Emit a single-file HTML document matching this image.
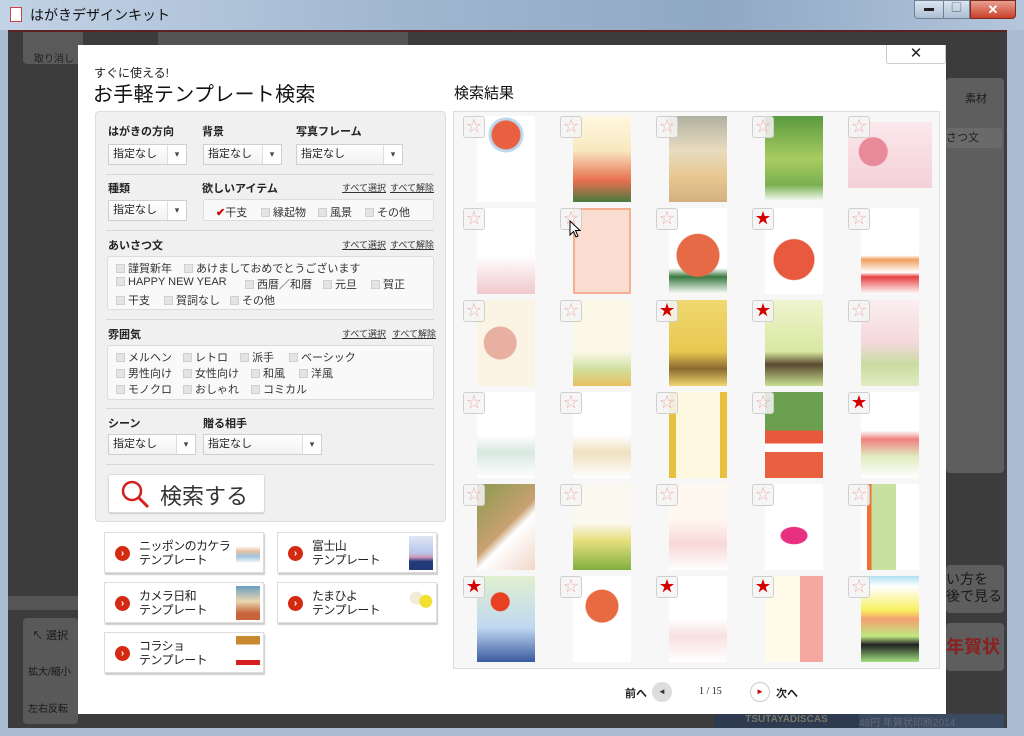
<!DOCTYPE html>
<html><head><meta charset="utf-8"><style>
*{margin:0;padding:0;box-sizing:border-box}
body{width:1024px;height:736px;overflow:hidden;position:relative;font-family:"Liberation Sans","Noto Sans CJK JP",sans-serif;background:#a9bcd2;color:#222}
.a{position:absolute}
.lbl{font-size:11px;font-weight:bold;color:#222}
.sel{position:absolute;height:21px;background:#fff;border:1px solid #cfcfcf;font-size:11px;line-height:19px;padding-left:4px;background:linear-gradient(#fff,#f2f2f2)}
.sel::after{content:"▾";position:absolute;right:0;top:0;width:18px;height:19px;border-left:1px solid #ddd;background:#fff;text-align:center;font-size:9px;color:#444}
.hr{position:absolute;left:106px;width:328px;height:1px;background:#d8d8d8}
.cbx{position:absolute;background:#f9f9f9;border:1px solid #dcdcdc;border-radius:3px}
.cb{position:absolute;font-size:11px;color:#333;white-space:nowrap}
.cb i{display:inline-block;width:9px;height:9px;background:#e4e4e4;border:1px solid #d0d0d0;margin-right:3px;vertical-align:-1px}
.lk{position:absolute;font-size:9px;color:#333;text-decoration:underline}
.tb{position:absolute;width:160px;height:41px;background:#fff;border:1px solid #ddd;box-shadow:1px 2px 1px #ccc;font-size:12px;line-height:14px;color:#222}
.tb b{position:absolute;left:10px;top:13px;width:15px;height:15px;border-radius:50%;background:#d42a12;color:#fff;font-size:10px;line-height:15px;text-align:center}
.tb span{position:absolute;left:34px;top:6px;font-weight:normal;letter-spacing:-0.6px;white-space:nowrap}
.tb em{position:absolute;right:3px;top:3px;width:24px;height:34px}
.th{position:absolute;width:58px;height:86px}
.st{position:absolute;width:22px;height:22px;border:1px solid #cfcfcf;border-radius:3px;background:rgba(245,245,245,.85);font-size:15px;line-height:19px;text-align:center;color:#f0b0b0}
.st.on{color:#d40000}
</style></head><body>
<div class="a" style="left:0;top:0;width:1024px;height:30px;background:linear-gradient(90deg,#c3d3e6,#9fb6cf 40%,#8fa8c4 70%,#b3c6dc)"></div>
<div class="a" style="left:10px;top:7px;width:12px;height:15px;background:#fff;border:1px solid #c44"></div>
<div class="a" style="left:30px;top:5px;font-size:14px;color:#111">はがきデザインキット</div>
<div class="a" style="left:914px;top:0;width:30px;height:19px;border:1px solid #6f7f94;border-radius:0 0 0 4px;background:linear-gradient(#dbe5f0,#aebfd3);text-align:center;font-size:10px;line-height:16px">▬</div>
<div class="a" style="left:943px;top:0;width:27px;height:19px;border:1px solid #6f7f94;background:linear-gradient(#dbe5f0,#aebfd3);text-align:center;font-size:10px;line-height:16px">▢</div>
<div class="a" style="left:970px;top:0;width:46px;height:19px;border:1px solid #7a2b22;border-radius:0 0 4px 0;background:linear-gradient(#e9a08f,#c9402a);text-align:center;color:#fff;font-weight:bold;font-size:13px;line-height:17px">✕</div>
<div class="a" style="left:8px;top:30px;width:999px;height:698px;background:#3c3c3c;border-top:2px solid #5a2222"></div>
<div class="a" style="left:23px;top:32px;width:60px;height:32px;background:#5a5a5a;border-radius:0 0 4px 4px"></div>
<div class="a" style="left:34px;top:50px;font-size:10px;color:#222">取り消し</div>
<div class="a" style="left:158px;top:32px;width:250px;height:28px;background:#545454"></div>
<div class="a" style="left:946px;top:78px;width:58px;height:395px;background:#5e5e5e;border-radius:4px"></div>
<div class="a" style="left:965px;top:90px;font-size:11px;color:#1a1a1a">素材</div>
<div class="a" style="left:946px;top:128px;width:56px;height:20px;background:#6a6a6a;border-radius:3px;font-size:11px;color:#222;line-height:20px">さつ文</div>
<div class="a" style="left:946px;top:565px;width:58px;height:48px;background:#5e5e5e;border-radius:4px;font-size:14px;color:#1a1a1a;line-height:17px;padding-top:6px">い方を<br>後で見る</div>
<div class="a" style="left:946px;top:623px;width:58px;height:48px;background:#5e5e5e;border-radius:4px;font-size:18px;color:#8a2020;font-weight:bold;line-height:48px">年賀状</div>
<div class="a" style="left:23px;top:618px;width:55px;height:106px;background:#595959;border-radius:4px"></div>
<div class="a" style="left:32px;top:627px;font-size:11px;color:#1a1a1a">↖ 選択</div>
<div class="a" style="left:28px;top:663px;font-size:10px;color:#1a1a1a">拡大/縮小</div>
<div class="a" style="left:28px;top:700px;font-size:10px;color:#1a1a1a">左右反転</div>
<div class="a" style="left:8px;top:596px;width:70px;height:14px;background:#555"></div>
<div class="a" style="left:714px;top:714px;width:145px;height:14px;background:#2d3a4f;color:#776;font-size:10px;font-weight:bold;text-align:center">TSUTAYADISCAS</div>
<div class="a" style="left:859px;top:714px;width:145px;height:14px;background:#3a4a60;color:#667;font-size:10px">48円 年賀状印刷2014</div>
<div class="a" style="left:0;top:728px;width:1024px;height:8px;background:#a9bcd2"></div>
<div class="a" style="left:78px;top:45px;width:868px;height:669px;background:#fff"></div>
<div class="a" style="left:886px;top:45px;width:60px;height:19px;border:1px solid #ccc;border-top:0;border-radius:0 0 3px 3px;background:#fff;text-align:center;font-size:15px;line-height:17px">✕</div>
<div class="a" style="left:94px;top:64px;font-size:12px;color:#222">すぐに使える!</div>
<div class="a" style="left:93px;top:78px;font-size:20px;color:#111;letter-spacing:.3px">お手軽テンプレート検索</div>
<div class="a" style="left:454px;top:82px;font-size:15px;color:#111">検索結果</div>
<div class="a" style="left:95px;top:111px;width:351px;height:411px;background:#f0f0f0;border:1px solid #ddd;border-radius:4px"></div>
<div class="a lbl" style="left:108px;top:123px">はがきの方向</div>
<div class="a lbl" style="left:202px;top:123px">背景</div>
<div class="a lbl" style="left:296px;top:123px">写真フレーム</div>
<div class="sel" style="left:108px;top:144px;width:79px">指定なし</div>
<div class="sel" style="left:203px;top:144px;width:79px">指定なし</div>
<div class="sel" style="left:296px;top:144px;width:107px">指定なし</div>
<div class="hr" style="top:174px"></div>
<div class="a lbl" style="left:108px;top:180px">種類</div>
<div class="a lbl" style="left:202px;top:180px">欲しいアイテム</div>
<div class="lk" style="left:342px;top:181px">すべて選択</div><div class="lk" style="left:390px;top:181px">すべて解除</div>
<div class="sel" style="left:108px;top:200px;width:79px">指定なし</div>
<div class="cbx" style="left:203px;top:199px;width:231px;height:22px"></div>
<div class="cb" style="left:216px;top:204px"><span style="color:#d40000;font-weight:bold">✔</span>干支</div>
<div class="cb" style="left:261px;top:204px"><i></i>縁起物</div>
<div class="cb" style="left:318px;top:204px"><i></i>風景</div>
<div class="cb" style="left:365px;top:204px"><i></i>その他</div>
<div class="hr" style="top:230px"></div>
<div class="a lbl" style="left:108px;top:237px">あいさつ文</div>
<div class="lk" style="left:342px;top:238px">すべて選択</div><div class="lk" style="left:390px;top:238px">すべて解除</div>
<div class="cbx" style="left:107px;top:256px;width:327px;height:54px"></div>
<div class="cb" style="left:116px;top:260px"><i></i>謹賀新年</div>
<div class="cb" style="left:184px;top:260px"><i></i>あけましておめでとうございます</div>
<div class="cb" style="left:116px;top:276px"><i></i>HAPPY NEW YEAR</div>
<div class="cb" style="left:245px;top:276px"><i></i>西暦／和暦</div>
<div class="cb" style="left:323px;top:276px"><i></i>元旦</div>
<div class="cb" style="left:371px;top:276px"><i></i>賀正</div>
<div class="cb" style="left:116px;top:292px"><i></i>干支</div>
<div class="cb" style="left:164px;top:292px"><i></i>賀詞なし</div>
<div class="cb" style="left:230px;top:292px"><i></i>その他</div>
<div class="hr" style="top:319px"></div>
<div class="a lbl" style="left:108px;top:326px">雰囲気</div>
<div class="lk" style="left:342px;top:327px">すべて選択</div><div class="lk" style="left:392px;top:327px">すべて解除</div>
<div class="cbx" style="left:107px;top:345px;width:327px;height:55px"></div>
<div class="cb" style="left:116px;top:349px"><i></i>メルヘン</div>
<div class="cb" style="left:183px;top:349px"><i></i>レトロ</div>
<div class="cb" style="left:240px;top:349px"><i></i>派手</div>
<div class="cb" style="left:289px;top:349px"><i></i>ベーシック</div>
<div class="cb" style="left:116px;top:365px"><i></i>男性向け</div>
<div class="cb" style="left:183px;top:365px"><i></i>女性向け</div>
<div class="cb" style="left:251px;top:365px"><i></i>和風</div>
<div class="cb" style="left:299px;top:365px"><i></i>洋風</div>
<div class="cb" style="left:116px;top:381px"><i></i>モノクロ</div>
<div class="cb" style="left:183px;top:381px"><i></i>おしゃれ</div>
<div class="cb" style="left:251px;top:381px"><i></i>コミカル</div>
<div class="hr" style="top:408px"></div>
<div class="a lbl" style="left:108px;top:415px">シーン</div>
<div class="a lbl" style="left:203px;top:415px">贈る相手</div>
<div class="sel" style="left:108px;top:434px;width:88px">指定なし</div>
<div class="sel" style="left:203px;top:434px;width:119px">指定なし</div>
<div class="hr" style="top:464px"></div>
<div class="a" style="left:108px;top:474px;width:157px;height:39px;background:#fff;border:1px solid #ddd;border-radius:3px;box-shadow:0 1px 1px #ccc"></div>
<svg class="a" style="left:118px;top:478px" width="36" height="32"><circle cx="14" cy="13" r="9" fill="none" stroke="#d42020" stroke-width="2.5"/><line x1="21" y1="20" x2="30" y2="29" stroke="#d42020" stroke-width="3"/></svg>
<div class="a" style="left:160px;top:479px;font-size:22px;color:#333">検索する</div>
<div class="tb" style="left:104px;top:532px"><b>›</b><span>ニッポンのカケラ<br>テンプレート</span><em style="background:linear-gradient(#fff 30%,#e8c0a0 45%,#9ec4e0 60%,#fff 80%)"></em></div>
<div class="tb" style="left:277px;top:532px"><b>›</b><span>富士山<br>テンプレート</span><em style="background:linear-gradient(#dfe6f4,#b8c6ea 50%,#d09ab8 62%,#233a7a 75%)"></em></div>
<div class="tb" style="left:104px;top:582px"><b>›</b><span>カメラ日和<br>テンプレート</span><em style="background:linear-gradient(#6a9ec0,#e8d8b0 45%,#c8643a 80%)"></em></div>
<div class="tb" style="left:277px;top:582px"><b>›</b><span>たまひよ<br>テンプレート</span><em style="background:radial-gradient(circle 7px at 70% 45%,#f4e030 6px,transparent 7px),radial-gradient(circle 7px at 30% 35%,#f4ead8 6px,transparent 7px),#fff"></em></div>
<div class="tb" style="left:104px;top:632px"><b>›</b><span>コラショ<br>テンプレート</span><em style="background:linear-gradient(#c88830 0 25%,#fff 25% 70%,#d42020 70% 85%,#fff 85%)"></em></div>
<div class="a" style="left:453px;top:111px;width:487px;height:558px;background:#f7f7f7;border:1px solid #ddd"></div>

<div class="th" style="left:477px;top:116px;background:radial-gradient(circle 16px at 50% 22%,#e86040 14px,#bcd8ee 15px 17px,transparent 18px),#fff"></div>
<div class="th" style="left:573px;top:116px;background:linear-gradient(#fff8e0,#f8e8c0 40%,#e87050 75%,#4a7a40)"></div>
<div class="th" style="left:669px;top:116px;background:linear-gradient(#b0b0a0,#e8dcc0 40%,#e8c890 70%,#d4b080)"></div>
<div class="th" style="left:765px;top:116px;background:linear-gradient(#5a9a40,#a8cc60 50%,#7ab050 80%,#fff)"></div>
<div class="th" style="left:848px;top:122px;width:84px;height:66px;background:radial-gradient(circle 15px at 30% 45%,#e88a9a 14px,transparent 15px),linear-gradient(#fbe8ec,#f4d0d8)"></div>

<div class="th" style="left:477px;top:208px;background:linear-gradient(#fff 55%,#f0c8cc)"></div>
<div class="th" style="left:573px;top:208px;background:#fadcd0;border:2px solid #f4b090"></div>
<div class="th" style="left:669px;top:208px;background:radial-gradient(circle 22px at 50% 55%,#e66a45 21px,transparent 22px),linear-gradient(#fff 70%,#3a7a40 80%,#fff)"></div>
<div class="th" style="left:765px;top:208px;background:radial-gradient(circle 21px at 50% 60%,#e85a40 20px,transparent 21px),#fff"></div>
<div class="th" style="left:861px;top:208px;background:linear-gradient(#fff 55%,#f0a060 60%,#fff 75%,#e84040 80%,#fff)"></div>

<div class="th" style="left:477px;top:300px;background:radial-gradient(circle 17px at 40% 50%,#e8b0a0 16px,transparent 17px),#fbf4e4"></div>
<div class="th" style="left:573px;top:300px;background:linear-gradient(#fbf8e8 60%,#d0e0a0 80%,#e8c060)"></div>
<div class="th" style="left:669px;top:300px;background:linear-gradient(#f0d870,#e8c850 60%,#8a6a30 80%,#f0d870)"></div>
<div class="th" style="left:765px;top:300px;background:linear-gradient(#f0f4d0,#d8e8a0 60%,#5a4a30 75%,#c8e090)"></div>
<div class="th" style="left:861px;top:300px;background:linear-gradient(#fbeef0,#f4d8dc 50%,#c8dca0 75%,#e0ecc0)"></div>

<div class="th" style="left:477px;top:392px;background:linear-gradient(#fff 50%,#d8e8e0 70%,#fff)"></div>
<div class="th" style="left:573px;top:392px;background:linear-gradient(#fff 50%,#f0e0c0 70%,#fff)"></div>
<div class="th" style="left:669px;top:392px;background:linear-gradient(90deg,#e8c040 0 12%,#fff8e0 12% 88%,#e8c040 88%)"></div>
<div class="th" style="left:765px;top:392px;background:linear-gradient(#6aa050 0 45%,#e8583a 45% 60%,#fff 60% 70%,#e86040 70%)"></div>
<div class="th" style="left:861px;top:392px;background:linear-gradient(#fff 45%,#f08080 55%,#e0ecc0 75%,#fff)"></div>

<div class="th" style="left:477px;top:484px;background:linear-gradient(135deg,#8a9a50,#c8a070 50%,#fff 60%,#f0d8c8)"></div>
<div class="th" style="left:573px;top:484px;background:linear-gradient(#fbf8f0 45%,#e8e080 65%,#80b040)"></div>
<div class="th" style="left:669px;top:484px;background:linear-gradient(#fff8f0 40%,#f8d8d8 70%,#fff)"></div>
<div class="th" style="left:765px;top:484px;background:radial-gradient(ellipse 14px 9px at 50% 60%,#e83080 13px,transparent 14px),#fff"></div>
<div class="th" style="left:861px;top:484px;background:linear-gradient(90deg,#fff 10%,#f07030 10% 18%,#c8e0a0 18% 60%,#fff 60%)"></div>

<div class="th" style="left:477px;top:576px;background:radial-gradient(circle 10px at 40% 30%,#e84020 9px,transparent 10px),linear-gradient(#e0f0d0,#c0d8f0 60%,#3a5aa0)"></div>
<div class="th" style="left:573px;top:576px;background:radial-gradient(circle 17px at 50% 35%,#e86a40 16px,transparent 17px),#fff"></div>
<div class="th" style="left:669px;top:576px;background:linear-gradient(#fff 50%,#f8e0e0 70%,#fff)"></div>
<div class="th" style="left:765px;top:576px;background:linear-gradient(90deg,#fffbe8 60%,#f4a8a0 60%)"></div>
<div class="th" style="left:861px;top:576px;background:linear-gradient(#b0e0f0,#fff 12%,#f8f060 40%,#f4a070 50%,#c0e880 70%,#222 80%,#a0e080)"></div>

<div class="st" style="left:463px;top:116px">☆</div><div class="st" style="left:560px;top:116px">☆</div><div class="st" style="left:656px;top:116px">☆</div><div class="st" style="left:752px;top:116px">☆</div><div class="st" style="left:848px;top:116px">☆</div>
<div class="st" style="left:463px;top:208px">☆</div><div class="st" style="left:560px;top:208px">☆</div><div class="st" style="left:656px;top:208px">☆</div><div class="st on" style="left:752px;top:208px">★</div><div class="st" style="left:848px;top:208px">☆</div>
<div class="st" style="left:463px;top:300px">☆</div><div class="st" style="left:560px;top:300px">☆</div><div class="st on" style="left:656px;top:300px">★</div><div class="st on" style="left:752px;top:300px">★</div><div class="st" style="left:848px;top:300px">☆</div>
<div class="st" style="left:463px;top:392px">☆</div><div class="st" style="left:560px;top:392px">☆</div><div class="st" style="left:656px;top:392px">☆</div><div class="st" style="left:752px;top:392px">☆</div><div class="st on" style="left:848px;top:392px">★</div>
<div class="st" style="left:463px;top:484px">☆</div><div class="st" style="left:560px;top:484px">☆</div><div class="st" style="left:656px;top:484px">☆</div><div class="st" style="left:752px;top:484px">☆</div><div class="st" style="left:848px;top:484px">☆</div>
<div class="st on" style="left:463px;top:576px">★</div><div class="st" style="left:560px;top:576px">☆</div><div class="st on" style="left:656px;top:576px">★</div><div class="st on" style="left:752px;top:576px">★</div><div class="st" style="left:848px;top:576px">☆</div>
<svg class="a" style="left:569px;top:220px" width="14" height="20"><path d="M1 1 L1 15 L4.5 11.5 L7 17 L9 16 L6.5 10.5 L11 10.5 Z" fill="#fff" stroke="#000" stroke-width="1"/></svg>
<div class="a" style="left:625px;top:685px;font-size:11px;font-weight:bold">前へ</div>
<div class="a" style="left:652px;top:682px;width:20px;height:20px;border-radius:50%;background:#ddd;font-size:8px;line-height:20px;text-align:center;color:#333">◄</div>
<div class="a" style="left:699px;top:686px;font-size:10px;font-family:'Liberation Serif',serif">1 / 15</div>
<div class="a" style="left:750px;top:682px;width:20px;height:20px;border-radius:50%;background:#fff;border:1px solid #ccc;font-size:8px;line-height:18px;text-align:center;color:#d40000">►</div>
<div class="a" style="left:776px;top:685px;font-size:11px;font-weight:bold">次へ</div>
</body></html>
